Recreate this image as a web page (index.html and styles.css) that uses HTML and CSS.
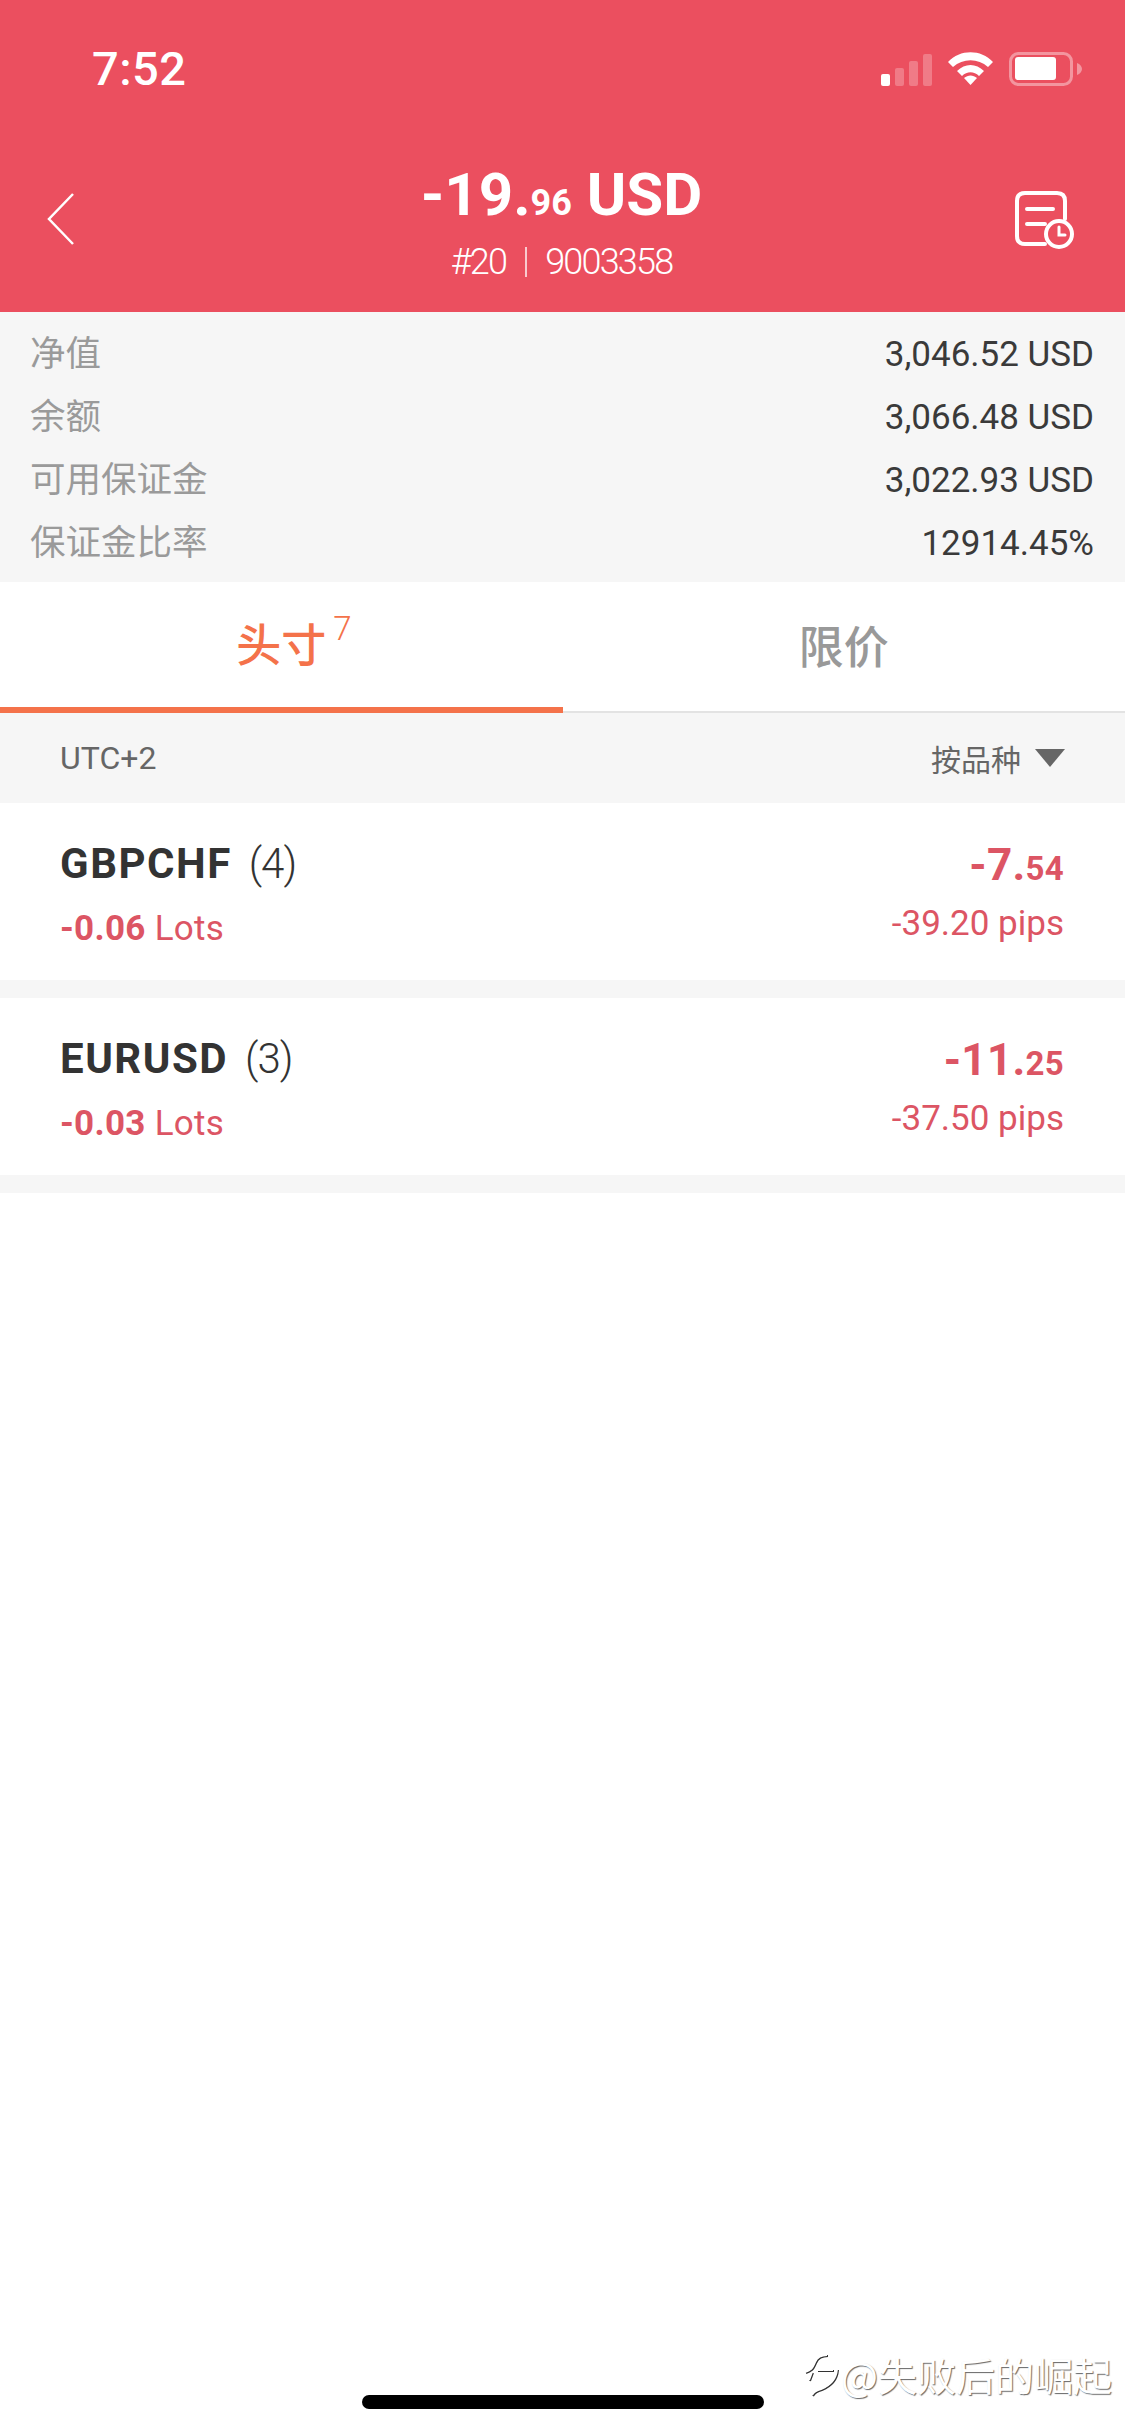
FILE: index.html
```html
<!DOCTYPE html>
<html lang="zh">
<head>
<meta charset="utf-8">
<title>Positions</title>
<link rel="stylesheet" href="styles.css">
</head>
<body>
<div class="phone">
  <header class="hero">
    <div class="status">
      <span class="time">7:52</span>
      <div class="status-icons">
        <svg width="52" height="33" viewBox="0 0 52 33"><rect x="0" y="21" width="9" height="12" rx="2" fill="#fff"/><rect x="14" y="15" width="9" height="18" rx="2" fill="#fff" opacity=".25"/><rect x="28" y="8" width="9" height="25" rx="2" fill="#fff" opacity=".25"/><rect x="42" y="1" width="9" height="32" rx="2" fill="#fff" opacity=".25"/></svg>
        <svg width="46" height="34" viewBox="0 0 46 34"><path d="M0 10C12 -3 33 -3 45 10L40 15C30 6 15 6 5 15Z" fill="#fff"/><path d="M9 19C17 11 28 11 36 19L31 24C26 19 19 19 14 24Z" fill="#fff"/><path d="M16 26C20 22.500 25 22.500 29 26L22.500 33Z" fill="#fff"/></svg>
        <svg width="74" height="34" viewBox="0 0 74 34"><rect x="1.500" y="1.500" width="61" height="31" rx="8" fill="none" stroke="#fff" stroke-opacity=".4" stroke-width="3"/><rect x="6" y="5" width="41" height="23" rx="3" fill="#fff"/><path d="M68 11C71 12 73 14.500 73 17C73 19.500 71 22 68 23Z" fill="#fff" fill-opacity=".4"/></svg>
      </div>
    </div>
    <div class="nav">
      <svg class="nav-icon" width="30" height="54" viewBox="0 0 30 54"><path d="M27 2L3 27L27 52" fill="none" stroke="#fff" stroke-width="2.500"/></svg>
      <div class="title">
        <div class="amount">-19.<small>96</small> USD</div>
        <div class="account">#20<i class="sep"></i>9003358</div>
      </div>
      <svg class="nav-icon report" width="65" height="60" viewBox="0 0 65 60"><path d="M53 30V12Q53 4 45 4H13Q5 4 5 12V47Q5 55 13 55H33" fill="none" stroke="#fff" stroke-width="4" stroke-linecap="round"/><path d="M15 20H41M15 35H33" fill="none" stroke="#fff" stroke-width="4" stroke-linecap="round"/><circle cx="47" cy="45" r="13" fill="none" stroke="#fff" stroke-width="4"/><path d="M47 38V46H53" fill="none" stroke="#fff" stroke-width="3" stroke-linecap="round"/></svg>
    </div>
  </header>

  <section class="stats">
    <div class="stat"><span class="k">净值</span><span class="v">3,046.52 USD</span></div>
    <div class="stat"><span class="k">余额</span><span class="v">3,066.48 USD</span></div>
    <div class="stat"><span class="k">可用保证金</span><span class="v">3,022.93 USD</span></div>
    <div class="stat"><span class="k">保证金比率</span><span class="v">12914.45%</span></div>
  </section>

  <nav class="tabs">
    <div class="tab active"><span class="tab-label">头寸<sup>7</sup></span></div>
    <div class="tab"><span class="tab-label">限价</span></div>
  </nav>

  <div class="filter">
    <span class="utc">UTC+2</span>
    <span class="group">按品种<i class="caret"></i></span>
  </div>

  <div class="row">
    <div class="left">
      <div class="sym"><b>GBPCHF</b><span>(4)</span></div>
      <div class="lots"><b>-0.06</b> Lots</div>
    </div>
    <div class="right">
      <div class="pl">-7.<small>54</small></div>
      <div class="pips">-39.20 pips</div>
    </div>
  </div>
  <div class="row">
    <div class="left">
      <div class="sym"><b>EURUSD</b><span>(3)</span></div>
      <div class="lots"><b>-0.03</b> Lots</div>
    </div>
    <div class="right">
      <div class="pl">-11.<small>25</small></div>
      <div class="pips">-37.50 pips</div>
    </div>
  </div>

  <div class="watermark">
    <svg class="wm-icon" width="36" height="44" viewBox="0 0 36 44"><path d="M2 20C8 18 9 17 12 10Q15 3 24 3M14 18H30M34 17Q33 31 18 37Q11 39 9 43M6 28L9 20" fill="none" stroke="#fff" stroke-width="2"/></svg>
    <span>@失败后的崛起</span>
  </div>
  <div class="home"></div>
</div>
</body>
</html>
```

FILE: styles.css
```css
* { box-sizing: border-box; }
html, body { margin: 0; padding: 0; background: #fff; }
body { font-family: "Roboto", "Noto Sans CJK SC", sans-serif; }
.phone { position: relative; width: 1125px; height: 2436px; overflow: hidden; background: #fff; }

.hero { height: 312px; background: #eb4f5f; color: #fff; padding-top: 49px; }
.status { display: flex; justify-content: space-between; align-items: center; height: 40px; padding: 0 42px 0 92px; }
.time { font: 500 47px/40px "Roboto", sans-serif; letter-spacing: .5px; }
.status-icons { display: flex; align-items: center; gap: 15px; }
.nav { display: grid; grid-template-columns: 1fr auto 1fr; align-items: center; padding: 76px 48px 0 46px; }
.nav-icon { margin-bottom: 10px; }
.report { justify-self: end; }
.title { text-align: center; }
.amount { font-weight: 700; font-size: 60px; line-height: 60px; }
.amount small { font-size: 36px; }
.account { display: flex; align-items: center; justify-content: center; margin-top: 8px; font-weight: 300; font-size: 36px; line-height: 42px; letter-spacing: -1.800px; }
.sep { width: 2px; height: 30px; background: #fff; opacity: .7; margin: 0 18px 0 19px; }

.stats { height: 270px; background: #f6f6f6; padding: 12px 31px 0 30px; }
.stat { display: flex; justify-content: space-between; align-items: center; height: 63px; }
.k { font: 400 35.500px/63px "Noto Sans CJK SC", sans-serif; color: #9a9a9a; padding-bottom: 10px; }
.v { font-size: 35px; line-height: 63px; color: #3a3a3a; padding-bottom: 3px; }

.tabs { display: flex; height: 131px; background: #fff; border-bottom: 2px solid #e3e3e3; }
.tab { flex: 1; display: flex; align-items: center; justify-content: center; font: 500 45px/1 "Noto Sans CJK SC", sans-serif; color: #999; padding-bottom: 4px; }
.tab.active { color: #f4724a; border-bottom: 6px solid #f4724a; margin-bottom: -2px; }
.tab-label { position: relative; }
.tab sup { position: absolute; left: 97px; top: -8px; font: 300 33px/1 "Roboto", sans-serif; }

.filter { display: flex; justify-content: space-between; align-items: center; height: 90px; background: #f6f6f6; padding: 0 60px; font: 400 30px/1 "Noto Sans CJK SC", sans-serif; color: #666; }
.utc { font: 400 32px/1 "Roboto", sans-serif; }
.group { display: flex; align-items: center; }
.caret { width: 0; height: 0; margin-left: 14px; border-left: 15.500px solid transparent; border-right: 15.500px solid transparent; border-top: 18px solid #666; }

.row { display: flex; justify-content: space-between; height: 177px; background: #fff; margin-bottom: 18px; padding: 35px 61px 0 60px; box-shadow: 0 18px 0 #f6f6f6; }
.sym { display: flex; align-items: center; height: 50px; color: #333; font-size: 42px; letter-spacing: 1.500px; }
.sym b { font-weight: 700; }
.sym span { margin-left: 17px; font-weight: 300; font-size: 42px; letter-spacing: -1px; }
.lots { margin-top: 19px; font-size: 35px; line-height: 44px; color: #dc5564; letter-spacing: .3px; }
.lots b { font-weight: 700; }
.right { text-align: right; color: #dc5564; }
.pl { font-weight: 700; font-size: 44px; line-height: 50px; margin-top: 2px; letter-spacing: .3px; }
.pl small { font-size: 33px; }
.pips { font-size: 35px; line-height: 44px; margin-top: 8px; }

.watermark { position: absolute; left: 803px; top: 2352px; display: flex; align-items: center; gap: 2px; }
.wm-icon { filter: drop-shadow(1px 1px 0 #333); }
.watermark span { font: 400 39px/1 "Noto Sans CJK SC", sans-serif; color: #fff; text-shadow: 1px 1px 1px rgba(0,0,0,.6); white-space: nowrap; }
.home { position: absolute; left: 362px; top: 2395px; width: 402px; height: 14px; border-radius: 7px; background: #000; }
```
